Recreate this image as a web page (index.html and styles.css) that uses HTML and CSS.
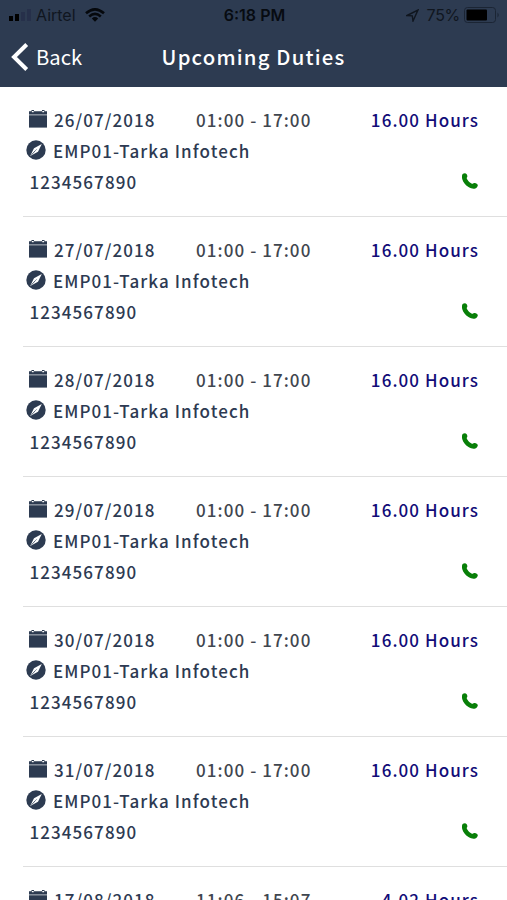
FILE: index.html
```
<!DOCTYPE html>
<html lang="en">
<head>
<meta charset="utf-8">
<title>Upcoming Duties</title>
<link rel="stylesheet" href="styles.css">
</head>
<body>
<svg class="defs" aria-hidden="true">
  <symbol id="calendar" viewBox="0 0 18 18">
    <path d="M0 1.300H2.500V0H5V1.300H13V0H15.500V1.300H18V4.500H0Z"/>
    <path class="gap" d="M0 4.500H18V5.300H0Z"/>
    <path d="M0 5.300H18V17.600H0Z"/>
    <path class="cut" d="M2.900 1H4.700V2.300H2.900ZM13.300 1H15.100V2.300H13.300Z"/>
  </symbol>
  <symbol id="compass" viewBox="0 0 20 20">
    <circle cx="10" cy="10" r="9.700"/>
    <path class="cut" d="M15.800 3.900L12 11.800L4.200 16.100L8 8.200Z"/>
    <path class="needle" d="M9.300 10.700L5.500 14.800M10.500 9.500L9.500 10.500"/>
  </symbol>
  <symbol id="phone" viewBox="0 0 16 16">
    <path d="M1 .7C2.300-.2 3.900 0 4.700 1.200C5.500 2.500 5.600 3.600 4.900 4.600C4.500 5.200 4.900 5.900 5.500 6.700C6.600 8.400 7.800 9.600 9.500 10.500C10.100 10.900 10.600 10.800 11.200 10.400C12.300 9.700 13.700 9.900 15.100 10.900C16.200 11.800 16 13.200 14.800 14.400C13.100 16.200 10 16.100 6.500 14.100C3.300 12.100 1.200 9.400.3 6.300C-.3 3.900-.2 1.600 1 .7Z"/>
  </symbol>
</svg>
<header class="header">
  <div class="status">
    <div class="carrier">
      <svg class="signal" viewBox="0 0 23 12"><path d="M0 7h4v5H0zM6 5h4v7H6z"/><path class="dim" d="M12 3h4v9h-4zM18 0h4v12h-4z"/></svg>
      <span>Airtel</span>
      <svg class="wifi" viewBox="0 0 20 14"><path d="M1 5.300Q10-2.600 19 5.300M4.200 8.400Q10 3.400 15.800 8.400"/><path class="dot" d="M6.800 10.500Q10 7.700 13.200 10.500L10 13.700Z"/></svg>
    </div>
    <div class="clock">6:18 PM</div>
    <div class="power">
      <svg class="location" viewBox="0 0 13 13"><path d="M1 6.500L12 1L7 12L6.300 6.900Z"/></svg>
      <span>75%</span>
      <svg class="battery" viewBox="0 0 36 16"><rect class="case" x=".5" y=".5" width="31" height="15" rx="3"/><rect x="2.500" y="2.500" width="20.500" height="11" rx="1"/><path class="tip" d="M33.500 5.500Q36 8 33.500 10.500Z"/></svg>
    </div>
  </div>
  <nav class="nav">
    <a class="back"><svg viewBox="0 0 18 28"><path d="M15.700 1.500L3 14L15.700 26.500"/></svg><span>Back</span></a>
    <h1>Upcoming Duties</h1>
  </nav>
</header>
<main class="list">
  <article class="duty">
    <div class="line"><svg class="calendar"><use href="#calendar"/></svg><span class="date">26/07/2018</span><span class="time">01:00 - 17:00</span><span class="hours">16.00 Hours</span></div>
    <div class="line"><svg class="compass"><use href="#compass"/></svg><span class="site">EMP01-Tarka Infotech</span></div>
    <div class="line"><span class="number">1234567890</span><svg class="phone"><use href="#phone"/></svg></div>
  </article>
  <article class="duty">
    <div class="line"><svg class="calendar"><use href="#calendar"/></svg><span class="date">27/07/2018</span><span class="time">01:00 - 17:00</span><span class="hours">16.00 Hours</span></div>
    <div class="line"><svg class="compass"><use href="#compass"/></svg><span class="site">EMP01-Tarka Infotech</span></div>
    <div class="line"><span class="number">1234567890</span><svg class="phone"><use href="#phone"/></svg></div>
  </article>
  <article class="duty">
    <div class="line"><svg class="calendar"><use href="#calendar"/></svg><span class="date">28/07/2018</span><span class="time">01:00 - 17:00</span><span class="hours">16.00 Hours</span></div>
    <div class="line"><svg class="compass"><use href="#compass"/></svg><span class="site">EMP01-Tarka Infotech</span></div>
    <div class="line"><span class="number">1234567890</span><svg class="phone"><use href="#phone"/></svg></div>
  </article>
  <article class="duty">
    <div class="line"><svg class="calendar"><use href="#calendar"/></svg><span class="date">29/07/2018</span><span class="time">01:00 - 17:00</span><span class="hours">16.00 Hours</span></div>
    <div class="line"><svg class="compass"><use href="#compass"/></svg><span class="site">EMP01-Tarka Infotech</span></div>
    <div class="line"><span class="number">1234567890</span><svg class="phone"><use href="#phone"/></svg></div>
  </article>
  <article class="duty">
    <div class="line"><svg class="calendar"><use href="#calendar"/></svg><span class="date">30/07/2018</span><span class="time">01:00 - 17:00</span><span class="hours">16.00 Hours</span></div>
    <div class="line"><svg class="compass"><use href="#compass"/></svg><span class="site">EMP01-Tarka Infotech</span></div>
    <div class="line"><span class="number">1234567890</span><svg class="phone"><use href="#phone"/></svg></div>
  </article>
  <article class="duty">
    <div class="line"><svg class="calendar"><use href="#calendar"/></svg><span class="date">31/07/2018</span><span class="time">01:00 - 17:00</span><span class="hours">16.00 Hours</span></div>
    <div class="line"><svg class="compass"><use href="#compass"/></svg><span class="site">EMP01-Tarka Infotech</span></div>
    <div class="line"><span class="number">1234567890</span><svg class="phone"><use href="#phone"/></svg></div>
  </article>
  <article class="duty">
    <div class="line"><svg class="calendar"><use href="#calendar"/></svg><span class="date">17/08/2018</span><span class="time">11:06 - 15:07</span><span class="hours">4.02 Hours</span></div>
  </article>
</main>
</body>
</html>
```
FILE: styles.css
```
* { box-sizing: border-box; }
body {
  margin: 0;
  height: 900px;
  overflow: hidden;
  background: #fff;
  color: #2d3a52;
  font-family: "Noto Sans CJK SC", "Noto Sans", sans-serif;
}
svg { display: block; flex: none; }
.defs { position: absolute; width: 0; height: 0; }
.cut { fill: #fff; }
.gap { fill: #77808f; }
.needle { fill: none; stroke: #2d3b51; stroke-width: .8; }

.header { height: 87px; background: #2d3b51; }
.status {
  display: grid;
  grid-template-columns: 1fr auto 1fr;
  align-items: center;
  height: 30px;
  padding: 0 7px 0 9px;
  color: #10161f;
  font: 400 16px/30px Inter, sans-serif;
}
.carrier, .power { display: flex; align-items: center; }
.signal { width: 23px; height: 12px; margin-right: 4px; }
.signal .dim { fill: #26304a; }
.wifi { width: 20px; height: 14px; margin-left: 9px; fill: none; stroke: #05080c; stroke-width: 2.6; }
.wifi .dot { fill: #05080c; stroke: none; }
.clock { color: #070b11; font-weight: 600; }
.power { justify-content: flex-end; }
.location { width: 13px; height: 13px; margin-right: 8px; fill: none; stroke: #10161f; stroke-width: 1.4; }
.power span { letter-spacing: -.3px; }
.battery { width: 36px; height: 16px; margin-left: 4px; }
.battery .case { fill: none; stroke: #1b2534; }
.battery .tip { fill: #1b2534; }

.nav { display: grid; grid-template-columns: 1fr auto 1fr; height: 54px; color: #fff; }
.back { display: flex; align-items: center; height: 53px; padding-left: 11px; font-size: 20.200px; line-height: 53px; }
.back svg { width: 18px; height: 28px; margin-right: 7px; fill: none; stroke: #fff; stroke-width: 4; }
h1 { margin: 0; font-size: 20.300px; font-weight: 500; line-height: 53px; letter-spacing: 1.200px; }

.duty { height: 130px; margin-left: 23px; padding: 17px 28px 0 0; border-bottom: 1px solid #dfdfdf; }
.line { display: flex; height: 31px; font-size: 17px; font-weight: 500; line-height: 31px; letter-spacing: 1.080px; white-space: nowrap; }
.calendar { width: 18px; height: 18px; margin: 6px 7px 0 6px; fill: #2d3b51; }
.date { width: 142px; }
.time { color: #3f464f; }
.hours { margin-left: auto; color: #120c78; }
.compass { width: 20px; height: 20px; margin: 4.500px 7px 0 3px; fill: #2d3b51; }
.number { margin-left: 6.500px; }
.phone { width: 16px; height: 16px; margin: 6.500px 1px 0 auto; fill: #087f08; }
```
